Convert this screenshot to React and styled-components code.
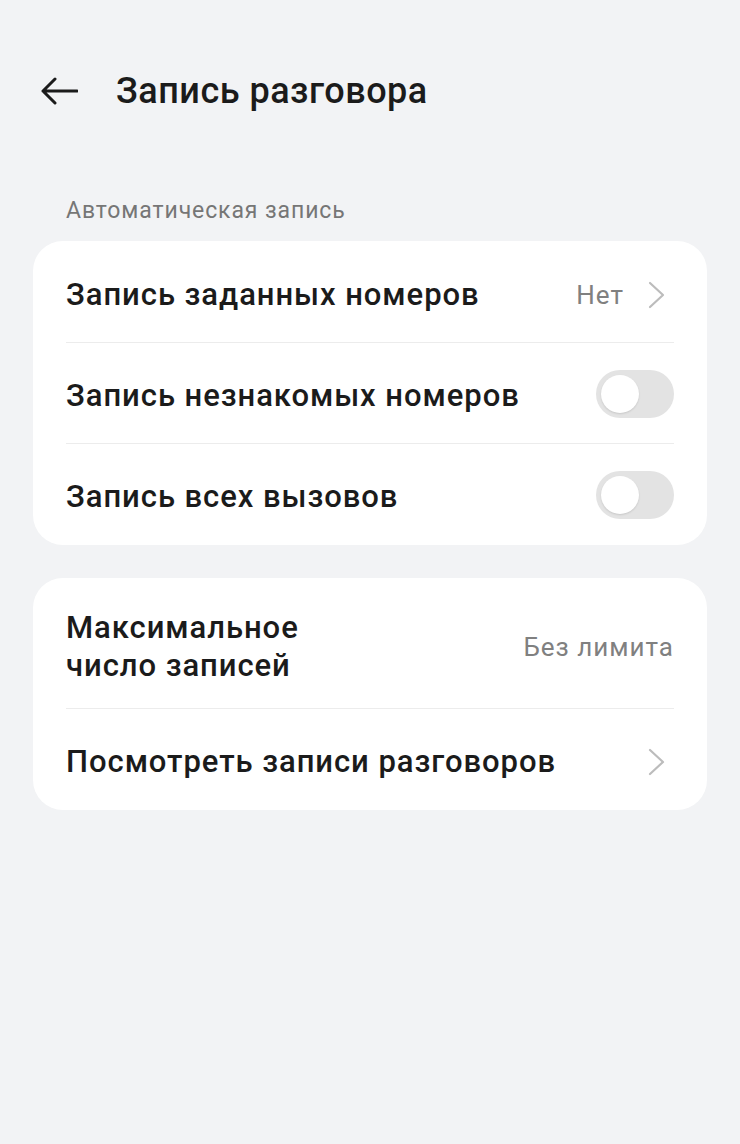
import React from 'react';
import styled, { createGlobalStyle } from 'styled-components';

const GlobalStyle = createGlobalStyle`
  html, body {
    margin: 0;
    padding: 0;
    background: #f2f3f5;
  }

  body {
    font-family: Roboto, "Noto Sans", "Liberation Sans", sans-serif;
    color: #1b1b1b;
  }
`;

const App = () => (
  <Page>
    <GlobalStyle />
    <Header>
      <BackButton aria-label="Назад">
        <svg width="38" height="28" viewBox="0 0 38 28" fill="none">
          <path
            d="M37 14H3M15 2L3 14l12 12"
            stroke="#1b1b1b"
            strokeWidth="3"
            strokeLinecap="round"
            strokeLinejoin="round"
          />
        </svg>
      </BackButton>
      <Title>Запись разговора</Title>
    </Header>

    <SectionLabel>Автоматическая запись</SectionLabel>
    <Card>
      <Row>
        <RowTitle>Запись заданных номеров</RowTitle>
        <RowValue>Нет</RowValue>
        <Chevron />
      </Row>
      <Row>
        <RowTitle>Запись незнакомых номеров</RowTitle>
        <Toggle />
      </Row>
      <Row>
        <RowTitle>Запись всех вызовов</RowTitle>
        <Toggle />
      </Row>
    </Card>

    <Card>
      <Row $tall>
        <RowTitle>
          Максимальное
          <br />
          число записей
        </RowTitle>
        <RowValue>Без лимита</RowValue>
      </Row>
      <Row>
        <RowTitle>Посмотреть записи разговоров</RowTitle>
        <Chevron />
      </Row>
    </Card>
  </Page>
);

const Chevron = () => (
  <ChevronBox>
    <svg width="18" height="28" viewBox="0 0 18 28" fill="none">
      <path
        d="M2 2l13 12L2 26"
        stroke="#bcbcbc"
        strokeWidth="2.2"
        strokeLinecap="round"
        strokeLinejoin="round"
      />
    </svg>
  </ChevronBox>
);

const Toggle = () => (
  <Track role="switch" aria-checked="false">
    <Knob />
  </Track>
);

const Page = styled.div`
  min-height: 1144px;
  padding: 0 33px;
  box-sizing: border-box;
`;

const Header = styled.div`
  display: flex;
  align-items: center;
  height: 92px;
  padding-top: 45px;
  margin-left: -3px;
`;

const BackButton = styled.div`
  display: flex;
  align-items: center;
  justify-content: center;
  width: 58px;
  height: 58px;
  margin-right: 28px;
`;

const Title = styled.h1`
  margin: 0;
  font-size: 36px;
  font-weight: 500;
  letter-spacing: 0.5px;
`;

const SectionLabel = styled.div`
  margin: 60px 0 0 33px;
  height: 44px;
  font-size: 23px;
  letter-spacing: 0.9px;
  color: #767676;
`;

const Card = styled.div`
  background: #fff;
  border-radius: 30px;
  padding: 1px 33px;
  margin-bottom: 33px;
`;

const Row = styled.div`
  display: flex;
  align-items: center;
  height: ${p => (p.$tall ? '123px' : '94px')};
  padding-top: 6px;

  & + & {
    border-top: 1px solid #ececec;
  }
`;

const RowTitle = styled.div`
  flex: 1;
  font-size: 31px;
  font-weight: 500;
  letter-spacing: 0.95px;
  line-height: 38px;
  color: #1b1b1b;
`;

const RowValue = styled.div`
  font-size: 26px;
  letter-spacing: 1px;
  color: #808080;
`;

const ChevronBox = styled.div`
  display: flex;
  align-items: center;
  justify-content: flex-end;
  width: 42px;
  padding-right: 8px;
`;

const Track = styled.div`
  position: relative;
  width: 78px;
  height: 48px;
  margin-top: -4px;
  border-radius: 24px;
  background: #e3e3e3;
`;

const Knob = styled.div`
  position: absolute;
  top: 5px;
  left: 5px;
  width: 38px;
  height: 38px;
  border-radius: 50%;
  background: #fff;
  box-shadow: 0 1px 2px rgba(0, 0, 0, 0.12);
`;

export default App;
